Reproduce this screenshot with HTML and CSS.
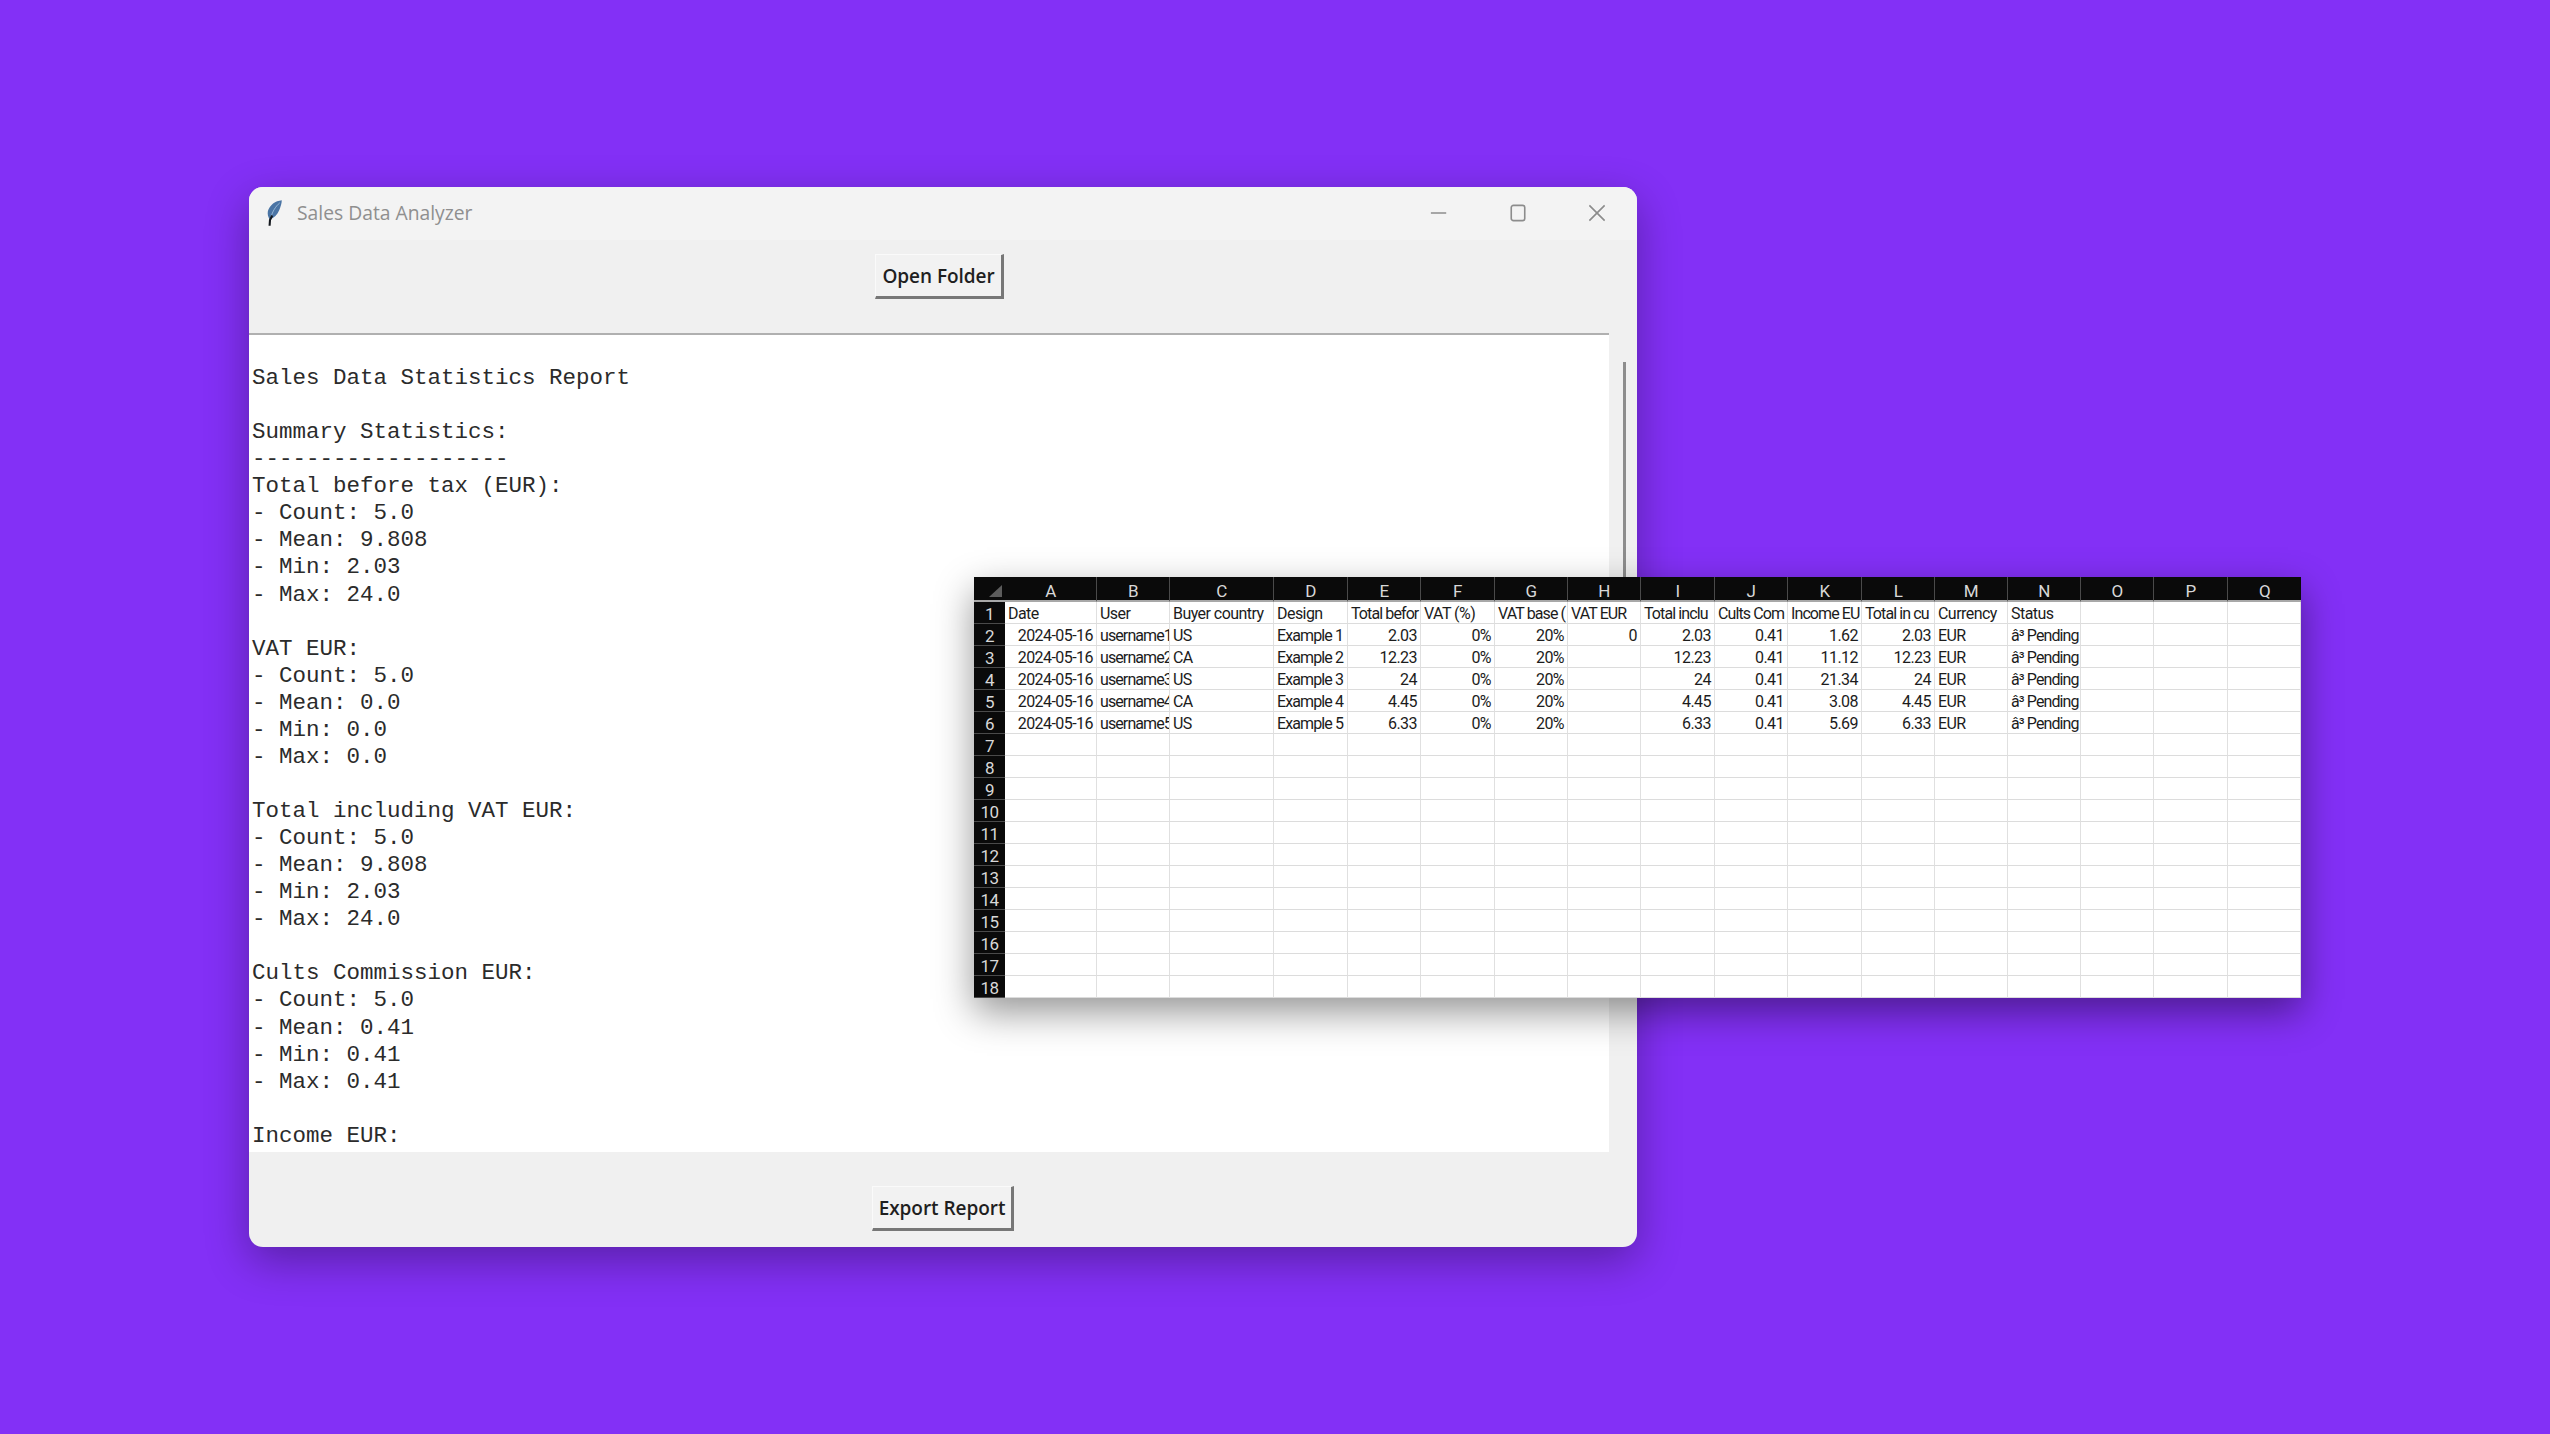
FILE: index.html
```html
<!DOCTYPE html>
<html lang="en">

<head>
    <meta charset="UTF-8">
    <title>Sales Data Analyzer</title>
    <link rel="stylesheet" href="styles.css">
</head>

<body>
    <main class="desktop">
        <section class="window">
            <header class="titlebar">
                <svg class="feather" viewBox="0 0 15 26" aria-hidden="true">
                    <path d="M14.800 0.200C8.500 0.800 2.500 5 0.900 11C0.300 14 1 17 2.800 19.500C7 18 10.500 14.500 12.300 10C13.700 6.500 14.700 3.500 14.800 0.200Z" fill="#4a74a4" />
                    <path d="M12.800 2.800C8.500 6.500 4.800 12 3.300 20" fill="none" stroke="#9dbcd9" stroke-width="0.900" />
                    <path d="M5.200 15.500L3 20L2.600 25.800" fill="none" stroke="#14181e" stroke-width="2.100" />
                </svg>
                <span class="titlebar-text">Sales Data Analyzer</span>
                <div class="window-controls">
                    <svg class="control" viewBox="0 0 20 20" aria-hidden="true"><path d="M1 10H18" /></svg>
                    <svg class="control" viewBox="0 0 20 20" aria-hidden="true"><rect x="2.500" y="1.500" width="15" height="17" rx="2.500" /></svg>
                    <svg class="control" viewBox="0 0 20 20" aria-hidden="true"><path d="M1.500 1.500L18.500 18.500M18.500 1.500L1.500 18.500" /></svg>
                </div>
            </header>
            <div class="toolbar toolbar-top">
                <button class="tk-button" type="button">Open Folder</button>
            </div>
            <div class="report-row">
                <pre class="report">
Sales Data Statistics Report

Summary Statistics:
-------------------
Total before tax (EUR):
- Count: 5.0
- Mean: 9.808
- Min: 2.03
- Max: 24.0

VAT EUR:
- Count: 5.0
- Mean: 0.0
- Min: 0.0
- Max: 0.0

Total including VAT EUR:
- Count: 5.0
- Mean: 9.808
- Min: 2.03
- Max: 24.0

Cults Commission EUR:
- Count: 5.0
- Mean: 0.41
- Min: 0.41
- Max: 0.41

Income EUR:</pre>
                <div class="scroll-gutter">
                    <div class="scroll-thumb"></div>
                </div>
            </div>
            <div class="toolbar toolbar-bottom">
                <button class="tk-button" type="button">Export Report</button>
            </div>
        </section>

        <section class="sheet">
            <table class="sheet-table">
                <colgroup>
                    <col class="col-head">
                    <col class="col-a">
                    <col class="col-73">
                    <col class="col-c">
                    <col class="col-74">
                    <col class="col-73">
                    <col class="col-74">
                    <col class="col-73">
                    <col class="col-73">
                    <col class="col-74">
                    <col class="col-73">
                    <col class="col-74">
                    <col class="col-73">
                    <col class="col-73">
                    <col class="col-73">
                    <col class="col-73">
                    <col class="col-74">
                    <col class="col-73">
                </colgroup>
                <thead>
                    <tr>
                        <th class="corner"><span class="corner-mark"></span></th>
                        <th>A</th><th>B</th><th>C</th><th>D</th><th>E</th><th>F</th><th>G</th><th>H</th><th>I</th><th>J</th><th>K</th><th>L</th><th>M</th><th>N</th><th>O</th><th>P</th><th>Q</th>
                    </tr>
                </thead>
                <tbody>
                    <tr><th>1</th><td>Date</td><td>User</td><td>Buyer country</td><td>Design</td><td class="tight">Total befor</td><td>VAT (%)</td><td class="tight">VAT base (</td><td class="tight">VAT EUR</td><td class="tight">Total inclu</td><td class="tight">Cults Com</td><td class="tight">Income EU</td><td class="tight">Total in cu</td><td>Currency</td><td>Status</td><td></td><td></td><td></td></tr>
                    <tr><th>2</th><td class="num">2024-05-16</td><td class="tight">username1</td><td>US</td><td class="tight">Example 1</td><td class="num">2.03</td><td class="num">0%</td><td class="num">20%</td><td class="num">0</td><td class="num">2.03</td><td class="num">0.41</td><td class="num">1.62</td><td class="num">2.03</td><td>EUR</td><td class="tight">â³ Pending</td><td></td><td></td><td></td></tr>
                    <tr><th>3</th><td class="num">2024-05-16</td><td class="tight">username2</td><td>CA</td><td class="tight">Example 2</td><td class="num">12.23</td><td class="num">0%</td><td class="num">20%</td><td></td><td class="num">12.23</td><td class="num">0.41</td><td class="num">11.12</td><td class="num">12.23</td><td>EUR</td><td class="tight">â³ Pending</td><td></td><td></td><td></td></tr>
                    <tr><th>4</th><td class="num">2024-05-16</td><td class="tight">username3</td><td>US</td><td class="tight">Example 3</td><td class="num">24</td><td class="num">0%</td><td class="num">20%</td><td></td><td class="num">24</td><td class="num">0.41</td><td class="num">21.34</td><td class="num">24</td><td>EUR</td><td class="tight">â³ Pending</td><td></td><td></td><td></td></tr>
                    <tr><th>5</th><td class="num">2024-05-16</td><td class="tight">username4</td><td>CA</td><td class="tight">Example 4</td><td class="num">4.45</td><td class="num">0%</td><td class="num">20%</td><td></td><td class="num">4.45</td><td class="num">0.41</td><td class="num">3.08</td><td class="num">4.45</td><td>EUR</td><td class="tight">â³ Pending</td><td></td><td></td><td></td></tr>
                    <tr><th>6</th><td class="num">2024-05-16</td><td class="tight">username5</td><td>US</td><td class="tight">Example 5</td><td class="num">6.33</td><td class="num">0%</td><td class="num">20%</td><td></td><td class="num">6.33</td><td class="num">0.41</td><td class="num">5.69</td><td class="num">6.33</td><td>EUR</td><td class="tight">â³ Pending</td><td></td><td></td><td></td></tr>
                    <tr><th>7</th><td></td><td></td><td></td><td></td><td></td><td></td><td></td><td></td><td></td><td></td><td></td><td></td><td></td><td></td><td></td><td></td><td></td></tr>
                    <tr><th>8</th><td></td><td></td><td></td><td></td><td></td><td></td><td></td><td></td><td></td><td></td><td></td><td></td><td></td><td></td><td></td><td></td><td></td></tr>
                    <tr><th>9</th><td></td><td></td><td></td><td></td><td></td><td></td><td></td><td></td><td></td><td></td><td></td><td></td><td></td><td></td><td></td><td></td><td></td></tr>
                    <tr><th>10</th><td></td><td></td><td></td><td></td><td></td><td></td><td></td><td></td><td></td><td></td><td></td><td></td><td></td><td></td><td></td><td></td><td></td></tr>
                    <tr><th>11</th><td></td><td></td><td></td><td></td><td></td><td></td><td></td><td></td><td></td><td></td><td></td><td></td><td></td><td></td><td></td><td></td><td></td></tr>
                    <tr><th>12</th><td></td><td></td><td></td><td></td><td></td><td></td><td></td><td></td><td></td><td></td><td></td><td></td><td></td><td></td><td></td><td></td><td></td></tr>
                    <tr><th>13</th><td></td><td></td><td></td><td></td><td></td><td></td><td></td><td></td><td></td><td></td><td></td><td></td><td></td><td></td><td></td><td></td><td></td></tr>
                    <tr><th>14</th><td></td><td></td><td></td><td></td><td></td><td></td><td></td><td></td><td></td><td></td><td></td><td></td><td></td><td></td><td></td><td></td><td></td></tr>
                    <tr><th>15</th><td></td><td></td><td></td><td></td><td></td><td></td><td></td><td></td><td></td><td></td><td></td><td></td><td></td><td></td><td></td><td></td><td></td></tr>
                    <tr><th>16</th><td></td><td></td><td></td><td></td><td></td><td></td><td></td><td></td><td></td><td></td><td></td><td></td><td></td><td></td><td></td><td></td><td></td></tr>
                    <tr><th>17</th><td></td><td></td><td></td><td></td><td></td><td></td><td></td><td></td><td></td><td></td><td></td><td></td><td></td><td></td><td></td><td></td><td></td></tr>
                    <tr><th>18</th><td></td><td></td><td></td><td></td><td></td><td></td><td></td><td></td><td></td><td></td><td></td><td></td><td></td><td></td><td></td><td></td><td></td></tr>
                </tbody>
            </table>
        </section>
    </main>
</body>

</html>
```

FILE: styles.css
```css
html,
body {
    margin: 0;
    padding: 0;
}

.desktop {
    position: relative;
    width: 2550px;
    height: 1434px;
    overflow: hidden;
    background: #8330f6;
}

/* app window */
.window {
    position: absolute;
    left: 249px;
    top: 187px;
    width: 1388px;
    height: 1060px;
    display: flex;
    flex-direction: column;
    overflow: hidden;
    border-radius: 14px;
    background: #f0f0f0;
    box-shadow: 0 14px 44px rgba(0, 0, 0, 0.32);
}

.titlebar {
    height: 53px;
    flex: none;
    display: flex;
    align-items: center;
    padding: 0 0 2px 18px;
    box-sizing: border-box;
    background: #f3f3f3;
}

.feather {
    width: 15px;
    height: 26px;
    margin-right: 15px;
}

.titlebar-text {
    font-family: "Open Sans", sans-serif;
    font-size: 19.300px;
    color: #8f8f8f;
}

.window-controls {
    margin-left: auto;
    display: flex;
    gap: 61px;
    padding-right: 31px;
}

.control {
    width: 18px;
    height: 18px;
    fill: none;
    stroke: #8c8c8c;
    stroke-width: 1.800;
}

.toolbar {
    flex: none;
    display: flex;
    justify-content: center;
}

.toolbar-top {
    height: 93px;
    padding: 14px 7px 0 0;
    box-sizing: border-box;
}

.toolbar-bottom {
    height: 95px;
    padding-top: 34px;
    box-sizing: border-box;
}

.tk-button {
    height: 45px;
    padding: 0 6px;
    box-sizing: border-box;
    font-family: "Open Sans", sans-serif;
    font-size: 19px;
    font-weight: 600;
    letter-spacing: -0.050px;
    color: #1f1f1f;
    background: #f2f2f2;
    border-style: solid;
    border-width: 1px 3px 3px 1px;
    border-color: #fafafa #777 #777 #fafafa;
    border-radius: 0;
}

.report-row {
    flex: 1;
    min-height: 0;
    display: flex;
}

.report {
    width: 1360px;
    margin: 0;
    padding: 30px 0 0 3px;
    box-sizing: border-box;
    overflow: hidden;
    font-family: "Liberation Mono", monospace;
    font-size: 22.500px;
    line-height: 27.070px;
    color: #2b2b2b;
    background: #fff;
    border-top: 2px solid #b0b0b0;
}

.scroll-gutter {
    flex: 1;
    padding: 29px 0 0 14px;
}

.scroll-thumb {
    width: 3px;
    height: 440px;
    background: #8d8d8d;
}

/* spreadsheet pasted over the window */
.sheet {
    position: absolute;
    left: 974px;
    top: 577px;
    width: 1327px;
    height: 421px;
    background: #fff;
    box-shadow: 0 14px 36px rgba(0, 0, 0, 0.42);
}

.sheet-table {
    width: 1327px;
    table-layout: fixed;
    border-collapse: separate;
    border-spacing: 0;
    font-family: Roboto, "Liberation Sans", sans-serif;
    font-size: 16px;
    line-height: 18px;
    letter-spacing: -0.550px;
}

.col-head { width: 31px; }
.col-a { width: 92px; }
.col-c { width: 104px; }
.col-73 { width: 73px; }
.col-74 { width: 74px; }

.sheet-table th,
.sheet-table td {
    box-sizing: border-box;
    height: 22px;
    padding: 3px 0 0;
    overflow: hidden;
    white-space: nowrap;
}

.sheet-table thead th {
    height: 25px;
    padding-top: 5px;
    font-weight: 400;
    font-size: 17px;
    color: #d8d8d8;
    background: #0a0a0a;
    border-right: 1px solid #4a4a4a;
    border-bottom: 2px solid #a8a8a8;
}

.sheet-table thead th:last-child {
    border-right: 0;
}

.sheet-table thead th.corner {
    position: relative;
    padding: 0;
    border-right: 0;
}

.corner-mark {
    position: absolute;
    right: 3px;
    bottom: 3px;
    width: 0;
    height: 0;
    border-left: 13px solid transparent;
    border-bottom: 12px solid #5c5c5c;
}

.sheet-table tbody th {
    font-weight: 400;
    font-size: 17px;
    color: #d8d8d8;
    background: #0a0a0a;
    border-bottom: 1px solid #4a4a4a;
}

.sheet-table td {
    padding: 3px 1px 0 3px;
    color: #1c1c1c;
    border-right: 1px solid #e0e0e0;
    border-bottom: 1px solid #dcdcdc;
}

.sheet-table td.num {
    text-align: right;
    padding-right: 3px;
}

.sheet-table td.tight {
    letter-spacing: -0.900px;
}
```
